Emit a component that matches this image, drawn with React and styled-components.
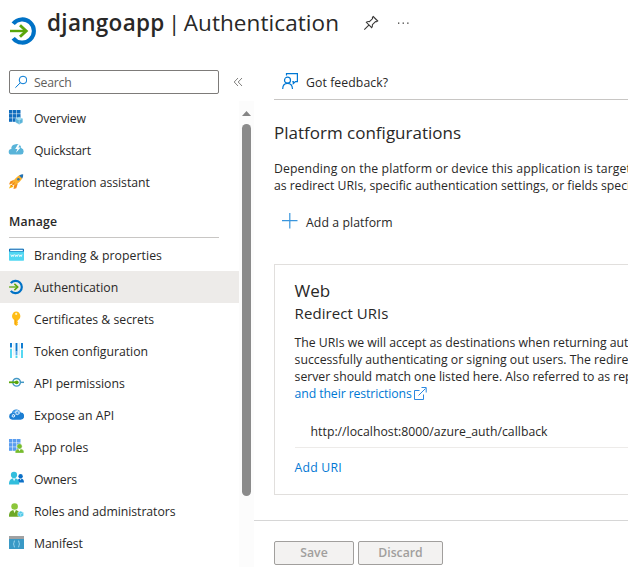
import React from "react";
import styled, { createGlobalStyle } from "styled-components";

const GlobalStyle = createGlobalStyle`
  * { box-sizing: border-box; }
  html, body { margin: 0; padding: 0; background: #fff; overflow: hidden; }
  body {
    font-family: "Open Sans", "Noto Sans", sans-serif;
    font-size: 12.25px;
    color: #292827;
  }
  svg { display: block; flex: none; }
  button, input { font: inherit; color: inherit; }
`;

const Blade = styled.div`
  width: 100vw;
  height: 567px;
  display: flex;
  flex-direction: column;
  overflow: hidden;
  background: #fff;
`;

const Header = styled.header`
  display: flex;
  height: 62px;
  padding-left: 8px;
  flex: none;
`;

const HeaderIcon = styled.div`
  width: 39px;
  padding-top: 16px;
`;

const Title = styled.h1`
  margin: 7px 0 0;
  height: 32px;
  line-height: 32px;
  font-size: 22.5px;
  font-weight: 400;
  letter-spacing: 0.08px;
  word-spacing: -2.6px;
  white-space: pre;
  width: 316px;
`;

const Strong = styled.span`
  font-weight: 600;
  letter-spacing: 0.3px;
`;

const TitleAction = styled.button`
  border: 0;
  background: none;
  padding: 0;
  height: 16px;
  margin: 15px 16px 0 0;
`;

const Columns = styled.div`
  display: flex;
  flex: 1;
  min-height: 0;
`;

const Sidebar = styled.aside`
  width: 254px;
  flex: none;
  display: flex;
  flex-direction: column;
`;

const SearchRow = styled.div`
  display: flex;
  align-items: center;
  height: 39px;
  padding: 1px 0 0 9px;
  gap: 14px;
`;

const SearchBox = styled.label`
  display: flex;
  align-items: center;
  gap: 7px;
  width: 210px;
  height: 24px;
  padding-left: 5px;
  border: 1px solid #7d7b79;
  border-radius: 2px;
  color: #605e5c;
  letter-spacing: -0.2px;
`;

const MenuArea = styled.div`
  display: flex;
  flex: 1;
`;

const Menu = styled.nav`
  width: 239px;
  padding-top: 1px;
`;

const MenuItem = styled.div`
  display: flex;
  align-items: center;
  gap: 10px;
  height: 32px;
  padding: 2px 0 0 8px;
  line-height: 18px;
  letter-spacing: ${(p) => p.$track || 0}px;
  white-space: nowrap;
  background: ${(p) => (p.$active ? "#edebe9" : "transparent")};
`;

const IconSlot = styled.span`
  margin-top: -2px;
`;

const MenuHeading = styled.h2`
  margin: 7px 0 0 9px;
  width: 210px;
  height: 33px;
  line-height: 33px;
  border-bottom: 1px solid #c8c6c4;
  font-size: 12.25px;
  font-weight: 600;
  letter-spacing: 0.186px;
`;

const MenuGroup = styled.div`
  padding-top: 1px;
`;

const ScrollTrack = styled.div`
  width: 15px;
  background: #fcfcfc;
  display: flex;
  flex-direction: column;
  align-items: center;
  padding-top: 10px;
`;

const ScrollThumb = styled.div`
  width: 9px;
  height: 372px;
  margin-top: 8px;
  border-radius: 5px;
  background: #8b8b8b;
`;

const Content = styled.main`
  flex: 1;
  min-width: 0;
  display: flex;
  flex-direction: column;
`;

const CommandBar = styled.div`
  margin-left: 20px;
  height: 38px;
  border-bottom: 1px solid #c8c6c4;
  display: flex;
  align-items: center;
  padding: 3px 0 0 8px;
  flex: none;
`;

const Command = styled.button`
  display: flex;
  align-items: center;
  gap: 8px;
  border: 0;
  padding: 0;
  background: none;
  letter-spacing: 0.08px;
`;

const CommandIcon = styled.span`
  margin-top: -2px;
`;

const Scroller = styled.div`
  height: 420px;
  padding: 22px 0 0 20px;
  overflow: hidden;
  flex: none;
`;

const SectionTitle = styled.h2`
  margin: 0;
  height: 24px;
  line-height: 22px;
  font-size: 17px;
  font-weight: 400;
`;

const Copy = styled.p`
  margin: ${(p) => p.$top}px 0 0;
  line-height: 17px;
  white-space: nowrap;
`;

const Line = styled.span`
  display: flex;
  height: 17px;
  letter-spacing: ${(p) => p.$track || 0}px;
`;

const AddPlatform = styled.div`
  height: 24px;
  margin: 16px 0 0 8px;
  display: flex;
`;

const Card = styled.section`
  width: 400px;
  height: 231px;
  margin-top: 30px;
  padding: 15px 20px 0 19.6px;
  border: 1px solid #e1dfdd;
`;

const CardTitle = styled.h3`
  margin: 0;
  font-size: 17px;
  line-height: 22px;
  font-weight: 400;
`;

const CardSubtitle = styled.h4`
  margin: 0;
  font-size: 15px;
  line-height: 22px;
  font-weight: 400;
  letter-spacing: 0.06px;
`;

const Link = styled.a`
  color: #0078d4;
  display: inline-flex;
  gap: 1px;
  letter-spacing: ${(p) => p.$track || 0}px;
`;

const LinkIcon = styled.span`
  margin-top: 1px;
`;

const UriRow = styled.div`
  height: 46px;
  padding: 13px 0 0 16px;
  line-height: 34px;
  border-bottom: 1px solid #edebe9;
  letter-spacing: 0.012px;
`;

const AddUri = styled.div`
  padding-top: 11px;
  line-height: 18px;
`;

const Footer = styled.footer`
  flex: 1;
  display: flex;
  gap: 4px;
  padding: 20px 0 0 20px;
  border-top: 1px solid #d6d6d6;
`;

const FooterButton = styled.button`
  width: ${(p) => p.$width}px;
  height: 24px;
  padding: 0;
  border: 1px solid #a19f9d;
  border-radius: 2px;
  background: #f3f2f1;
  color: #a19f9d;
  font-weight: 600;
  line-height: 22px;
`;

const AuthIcon = ({ size }) => (
  <svg width={size} height={size} viewBox="0 0 30 30" fill="none">
    <path d="M5.2 7.8A11.6 11.6 0 1 1 5.2 22.2" stroke="#0072c6" strokeWidth="4.1" />
    <path d="M2 15H18" stroke="#59a60b" strokeWidth="2.4" />
    <path d="M12 9.2L18.2 15L12 20.8" stroke="#59a60b" strokeWidth="2.9" />
  </svg>
);

const Svg16 = ({ children }) => (
  <svg width="16" height="16" viewBox="0 0 16 16" fill="none">{children}</svg>
);

const Cells = ({ color }) => (
  <g fill={color}>
    {[0, 1, 2].map((r) =>
      [0, 1, 2].map((c) => (
        <rect key={`${r}${c}`} x={1 + c * 4} y={r * 4.1} width="3.5" height="3.6" />
      ))
    )}
  </g>
);

const icons = {
  overview: (
    <Svg16>
      <Cells color="#0f6cbd" />
      <path d="M11.2 7L14.8 8.7V12.5L11.2 14.4L7.6 12.5V8.7Z" fill="#5ab4d9" stroke="#fff" strokeWidth=".3" />
      <path d="M11.2 7.2L14.6 8.8L11.2 10.5L7.8 8.8Z" fill="#a5dcf0" />
      <path d="M11.2 10.5V14.2" stroke="#c7eaf6" strokeWidth=".6" />
    </Svg16>
  ),
  quickstart: (
    <Svg16>
      <path d="M3.6 12.6A2.8 2.8 0 0 1 3.4 7A3.6 3.6 0 0 1 6.6 2.6C9.6 1 13 2.6 13.2 6A3.4 3.4 0 0 1 13 12.6Z" fill="#59b4d9" />
      <path d="M10 2.2L7.2 7H9.4L8 10.8L12.6 5.4H10.3L12.2 2.2Z" fill="#fff" />
    </Svg16>
  ),
  rocket: (
    <Svg16>
      <path d="M1 14.6L2.8 10.2L5.6 12.8Z" fill="#ffb900" />
      <path d="M6 5.8L2.2 7.6L1 10.6L5.2 9.2Z" fill="#f28b1c" />
      <path d="M9.8 9.6L8.3 14.2L5.5 14.9L6.4 10.3Z" fill="#f28b1c" />
      <path d="M14.8 .8C10.8 .6 6.6 4.1 3.8 9.5L6.2 11.8C11.7 8.8 15.2 4.7 14.8 .8Z" fill="#fbb12e" />
      <path d="M11.2 1.4C12.4 .6 13.8 .3 15.2 .3C15.3 1.8 15 3.2 14.2 4.5Z" fill="#2072b8" />
      <circle cx="10.4" cy="5.3" r="1.3" fill="#2a75ad" />
      <path d="M3 12.3L6.6 8.8" stroke="#df6815" />
    </Svg16>
  ),
  branding: (
    <Svg16>
      <rect x="1" y="1.8" width="15" height="12" rx=".7" fill="#50d7f2" />
      <path d="M1 2.8Q1 1.8 2 1.8H15Q16 1.8 16 2.8V4.6H1Z" fill="#1769b4" />
      <rect x="2.2" y="2.8" width="12.6" height="1.2" fill="#f4fcff" />
      <path d="M2.8 7.4L3.6 9.6L4.4 7.9L5.2 9.6L6 7.4M6.8 7.4L7.6 9.6L8.4 7.9L9.2 9.6L10 7.4M10.8 7.4L11.6 9.6L12.4 7.9L13.2 9.6L14 7.4" stroke="#fff" strokeWidth=".8" />
    </Svg16>
  ),
  auth: <AuthIcon size={16} />,
  key: (
    <Svg16>
      <path d="M8.2 .4A4.7 4.7 0 0 0 6.2 9V13.3L8.2 15.1L10.2 13.3L9.2 12.2L10.2 11.3L9.2 10.3L10.2 9A4.7 4.7 0 0 0 8.2 .4Z" fill="#ffbd16" />
      <circle cx="8.2" cy="2.9" r="1.1" fill="#fff4c0" />
      <path d="M7.4 8.7V13.8" stroke="#f39c12" strokeWidth=".8" />
    </Svg16>
  ),
  token: (
    <Svg16>
      <path d="M3 0V4.5M8.5 0V8.5M14 0V5.5" stroke="#0878cf" strokeWidth="1.9" />
      <path d="M3 5.8V15M8.5 12.5V15M14 6.8V15" stroke="#50d7f2" strokeWidth="1.9" />
      <path d="M5.9 0V12.5M11.2 0V12.5" stroke="#b9dff2" strokeWidth=".6" />
      <path d="M8.5 8.5V12" stroke="#59a8e8" strokeWidth="1.9" />
    </Svg16>
  ),
  permissions: (
    <Svg16>
      <circle cx="8.6" cy="7.3" r="3.8" stroke="#4498c5" strokeWidth="1.4" />
      <path d="M12 7.3H16" stroke="#4498c5" strokeWidth="1.5" />
      <path d="M1 7.3H9" stroke="#59a60b" strokeWidth="1.8" />
      <circle cx="8.7" cy="7.3" r="1.9" fill="#59a60b" />
    </Svg16>
  ),
  expose: (
    <Svg16>
      <path d="M4.2 12.7A3.4 3.4 0 0 1 3.8 6A4.7 4.7 0 0 1 12.7 5.6A3.55 3.55 0 0 1 12.6 12.7Z" fill="#1c7ed2" />
      <path d="M4.2 6.3A4.5 4.5 0 0 1 12.6 5.6Z" fill="#4ba2ec" />
      <circle cx="9.3" cy="5.7" r="1.8" stroke="#e4f2ff" strokeWidth="1.4" strokeDasharray="1.1 .4" />
      <circle cx="5.4" cy="8.8" r="1.2" stroke="#e4f2ff" strokeWidth="1.2" strokeDasharray=".9 .3" />
    </Svg16>
  ),
  roles: (
    <Svg16>
      <Cells color="#5a9def" />
      <path d="M7.3 14V12.6Q7.8 9.8 11.5 9.8Q15.4 9.8 15.8 12.6V14Z" fill="#76bc2d" stroke="#fff" strokeWidth=".3" />
      <circle cx="11.5" cy="7.3" r="2.6" fill="#76bc2d" stroke="#fff" strokeWidth=".4" />
      <path d="M10.4 10L11.5 12.2L12.6 10Z" fill="#fff" />
    </Svg16>
  ),
  owners: (
    <Svg16>
      <circle cx="12.6" cy="5.2" r="2.2" fill="#0c70c7" />
      <path d="M9.4 11.5Q9.4 7.6 12.6 7.6Q16 7.6 16 11.5Z" fill="#0c70c7" />
      <circle cx="6" cy="3.9" r="3.1" fill="#32bedd" />
      <path d="M1 13.6V12Q1.5 7.2 6.1 7.2Q10.8 7.2 11.2 12V13.6Z" fill="#32bedd" />
      <path d="M4.8 7.4L6.1 10.2L7.4 7.4Z" fill="#e5faff" />
      <path d="M11.8 7.7L12.6 9.4L13.4 7.7Z" fill="#e5faff" />
    </Svg16>
  ),
  admin: (
    <Svg16>
      <circle cx="6.6" cy="3.5" r="3.3" fill="#8cc63a" />
      <path d="M1 13.7V11.7Q1.5 6.9 6.6 6.9Q11.4 6.9 12 11.7V13.7Z" fill="#6da827" />
      <path d="M5.3 7.1L6.6 10.3L7.9 7.1Z" fill="#f4ffdc" />
      <path d="M12.7 8.1L15.6 9.5V12.8L12.7 14.3L9.8 12.8V9.5Z" fill="#50c8e8" stroke="#fff" strokeWidth=".4" />
      <path d="M10.4 9.7L12.7 10.8L15 9.7M12.7 10.8V13.7" stroke="#c7f1fb" strokeWidth=".6" />
    </Svg16>
  ),
  manifest: (
    <Svg16>
      <rect x="1" y="1" width="15" height="13" fill="#3999c6" />
      <rect x="1" y="1" width="15" height="3" fill="#a0a1a2" />
      <path d="M7 5.8Q5.8 5.8 6 7.5Q6.1 8.8 5.2 9Q6.1 9.1 6 10.5Q5.8 12.1 7 12.1M10 5.8Q11.2 5.8 11 7.5Q10.9 8.8 11.8 9Q10.9 9.1 11 10.5Q11.2 12.1 10 12.1" stroke="#a9dcf2" strokeWidth=".9" />
    </Svg16>
  ),
};

const topItems = [
  ["overview", "Overview", -0.16],
  ["quickstart", "Quickstart", -0.2],
  ["rocket", "Integration assistant", -0.04],
];

const manageItems = [
  ["branding", "Branding & properties", 0.06],
  ["auth", "Authentication", 0.02],
  ["key", "Certificates & secrets", 0.01],
  ["token", "Token configuration", -0.02],
  ["permissions", "API permissions", -0.02],
  ["expose", "Expose an API", 0.02],
  ["roles", "App roles", 0.02],
  ["owners", "Owners", -0.25],
  ["admin", "Roles and administrators", -0.06],
  ["manifest", "Manifest", -0.1],
];

const renderItem = ([icon, label, track]) => (
  <MenuItem key={label} $track={track} $active={label === "Authentication"}>
    <IconSlot>{icons[icon]}</IconSlot>
    {label}
  </MenuItem>
);

export default function App() {
  return (
    <Blade>
      <GlobalStyle />
      <Header>
        <HeaderIcon><AuthIcon size={30} /></HeaderIcon>
        <Title><Strong>djangoapp</Strong> | Authentication</Title>
        <TitleAction aria-label="Pin">
          <svg width="16" height="16" viewBox="0 0 16 16" fill="none" stroke="#3b3a39" strokeWidth="1.1">
            <path d="M10.2 1.5L14.7 6L13.6 6.7L12.5 6.5L9.4 9.6Q9.7 11.4 8.7 12.6L3.4 7.3Q4.8 6.2 6.4 6.6L9.6 3.6L9.4 2.5ZM6.1 9.9L1.3 14.7" />
          </svg>
        </TitleAction>
        <TitleAction aria-label="More">
          <svg width="16" height="16" viewBox="0 0 16 16" fill="#3b3a39">
            <rect x="3" y="7.5" width="1.3" height="1.3" /><rect x="7.6" y="7.5" width="1.3" height="1.3" /><rect x="12.2" y="7.5" width="1.3" height="1.3" />
          </svg>
        </TitleAction>
      </Header>
      <Columns>
        <Sidebar>
          <SearchRow>
            <SearchBox>
              <svg width="12" height="14" viewBox="0 0 12 14" fill="none" stroke="#0078d4">
                <circle cx="8" cy="5" r="3.8" /><path d="M5.3 7.8L.4 12.7" />
              </svg>
              Search
            </SearchBox>
            <svg width="10" height="10" viewBox="0 0 10 10" fill="none" stroke="#605e5c" strokeWidth=".8">
              <path d="M5 1L1.2 5L5 9M9 1L5.2 5L9 9" />
            </svg>
          </SearchRow>
          <MenuArea>
            <Menu>
              {topItems.map(renderItem)}
              <MenuHeading>Manage</MenuHeading>
              <MenuGroup>{manageItems.map(renderItem)}</MenuGroup>
            </Menu>
            <ScrollTrack>
              <svg width="9" height="5" viewBox="0 0 9 5"><path d="M4.5 0L9 5H0Z" fill="#858585" /></svg>
              <ScrollThumb />
            </ScrollTrack>
          </MenuArea>
        </Sidebar>
        <Content>
          <CommandBar>
            <Command>
              <CommandIcon>
                <svg width="16" height="18" viewBox="0 0 16 18" fill="none" stroke="#0078d4" strokeWidth="1.2">
                  <path d="M4.5 3.5V1.6H15.4V9.6H13.4L11.3 11.6V9.6H10.3" />
                  <circle cx="5.5" cy="8.2" r="3" /><path d="M.7 17Q.8 11.4 5.5 11.4Q10.2 11.4 10.5 17" />
                </svg>
              </CommandIcon>
              Got feedback?
            </Command>
          </CommandBar>
          <Scroller>
            <SectionTitle>Platform configurations</SectionTitle>
            <Copy $top={14}>
              <Line $track={0.117}>Depending on the platform or device this application is targeting,</Line>
              <Line $track={-0.009}>as redirect URIs, specific authentication settings, or fields specific</Line>
            </Copy>
            <AddPlatform>
              <Command>
                <CommandIcon>
                  <svg width="16" height="16" viewBox="0 0 16 16" stroke="#3a96dd" strokeWidth="1.2"><path d="M0 7.7H15.5M7.8 0V15.5" /></svg>
                </CommandIcon>
                Add a platform
              </Command>
            </AddPlatform>
            <Card>
              <CardTitle>Web</CardTitle>
              <CardSubtitle>Redirect URIs</CardSubtitle>
              <Copy $top={10}>
                <Line $track={-0.011}>The URIs we will accept as destinations when returning authentication</Line>
                <Line $track={-0.004}>successfully authenticating or signing out users. The redirect</Line>
                <Line $track={-0.023}>server should match one listed here. Also referred to as reply</Line>
                <Line>
                  <Link $track={-0.1}>
                    and their restrictions
                    <LinkIcon>
                      <svg width="15" height="15" viewBox="0 0 15 15" fill="none" stroke="#2b88e0" strokeWidth="1">
                        <path d="M6.5 4.5H1.5V13.5H10.5V8.5M5.5 9.5L12.5 2.5M8.5 1.5H13.2V6.5" />
                      </svg>
                    </LinkIcon>
                  </Link>
                </Line>
              </Copy>
              <UriRow>http://localhost:8000/azure_auth/callback</UriRow>
              <AddUri><Link $track={0.2}>Add URI</Link></AddUri>
            </Card>
          </Scroller>
          <Footer>
            <FooterButton $width={80}>Save</FooterButton>
            <FooterButton $width={85}>Discard</FooterButton>
          </Footer>
        </Content>
      </Columns>
    </Blade>
  );
}
